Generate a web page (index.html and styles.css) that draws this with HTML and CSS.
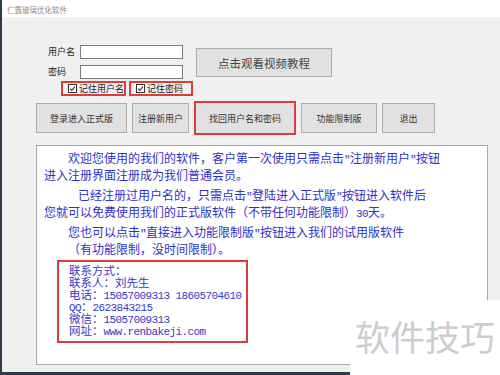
FILE: index.html
```html
<!DOCTYPE html>
<html lang="zh-CN">

<head>
  <meta charset="UTF-8">
  <meta name="viewport" content="width=device-width, initial-scale=1.0">
  <title>仁霸玻璃优化软件</title>
  <link rel="stylesheet" href="styles.css">
</head>

<body>
  <div class="window">
    <div class="titlebar">仁霸玻璃优化软件</div>
    <div class="client">
      <div class="login">
        <div class="fields">
          <label class="label">用户名</label>
          <input class="input" type="text">
          <label class="label">密码</label>
          <input class="input" type="password">
        </div>
        <button class="btn video">点击观看视频教程</button>
      </div>
      <div class="remember">
        <span class="check name">
          <svg width="9" height="9" viewBox="0 0 9 9"><rect x="0.5" y="0.5" width="8" height="8" fill="#fff" stroke="#333"/><path d="M2 4.6 L3.8 6.4 L7 2.6" fill="none" stroke="#333" stroke-width="1.1"/></svg>
          <span>记住用户名</span>
        </span>
        <span class="check pass">
          <svg width="9" height="9" viewBox="0 0 9 9"><rect x="0.5" y="0.5" width="8" height="8" fill="#fff" stroke="#333"/><path d="M2 4.6 L3.8 6.4 L7 2.6" fill="none" stroke="#333" stroke-width="1.1"/></svg>
          <span>记住密码</span>
        </span>
      </div>
      <div class="actions">
        <button class="btn w-login">登录进入正式版</button>
        <button class="btn w-reg">注册新用户</button>
        <button class="btn w-find marked">找回用户名和密码</button>
        <button class="btn w-limit">功能限制版</button>
        <button class="btn w-exit">退出</button>
      </div>
      <div class="memo">
        <div class="para">
          <div class="ln in2">欢迎您使用的我们的软件，客户第一次使用只需点击<span class="en">"</span>注册新用户<span class="en">"</span>按钮</div>
          <div class="ln">进入注册界面注册成为我们普通会员。</div>
        </div>
        <div class="para">
          <div class="ln in3">已经注册过用户名的，只需点击<span class="en">"</span>登陆进入正式版<span class="en">"</span>按钮进入软件后</div>
          <div class="ln">您就可以免费使用我们的正式版软件（不带任何功能限制）<span class="en">30</span>天。</div>
        </div>
        <div class="para">
          <div class="ln in2">您也可以点击<span class="en">"</span>直接进入功能限制版<span class="en">"</span>按钮进入我们的试用版软件</div>
          <div class="ln in2">（有功能限制，没时间限制）。</div>
        </div>
        <div class="contact">
          <div class="row">联系方式：</div>
          <div class="row">联系人：刘先生</div>
          <div class="row">电话：<span class="en">15057009313 18605704610</span></div>
          <div class="row"><span class="en">QQ</span>：<span class="en">2623843215</span></div>
          <div class="row">微信：<span class="en">15057009313</span></div>
          <div class="row">网址：<span class="en">www.renbakeji.com</span></div>
        </div>
      </div>
    </div>
  </div>
  <div class="watermark">软件技巧</div>
</body>

</html>
```

FILE: styles.css
```css
body {
  margin: 0;
  width: 500px;
  height: 375px;
  overflow: hidden;
  background: #2f3a48;
  font-family: "Noto Sans CJK SC", "Microsoft YaHei", sans-serif;
  position: relative;
}

.window {
  margin-left: 2px;
  width: 498px;
  height: 372px;
  background: #f0f0f0;
  display: flex;
  flex-direction: column;
}

.titlebar {
  height: 18px;
  background: #fff;
  color: #8c8c8c;
  font-size: 7.5px;
  line-height: 20px;
  padding-left: 5px;
  border-bottom: 1px solid #f4f4f4;
  box-sizing: border-box;
}

.client {
  flex: 1;
  padding-top: 27px;
}

.login {
  display: flex;
  padding-left: 46px;
}

.fields {
  display: grid;
  grid-template-columns: 32px 103px;
  row-gap: 6px;
  align-items: center;
}

.label {
  font-size: 9px;
  color: #222;
  line-height: 14px;
}

.input {
  height: 14px;
  width: 103px;
  box-sizing: border-box;
  border: 1px solid #7a7a7a;
  background: #fff;
  padding: 0;
  margin: 0;
}

.btn {
  font-family: "Noto Sans CJK SC", "Microsoft YaHei", sans-serif;
  font-size: 9px;
  color: #333;
  background: #e1e1e1;
  border: 1px solid #adadad;
  height: 30px;
  padding: 0;
  box-sizing: border-box;
}

.video {
  margin: 3px 0 0 13px;
  width: 136px;
  height: 29px;
  font-size: 11.5px;
  color: #444;
}

.remember {
  display: flex;
  gap: 3px;
  margin: 2px 0 0 59px;
}

.check {
  display: flex;
  align-items: center;
  gap: 2px;
  height: 15px;
  box-sizing: border-box;
  border: 2px solid #de3b3b;
  padding-left: 5px;
  font-size: 9px;
  line-height: 11px;
  color: #222;
  white-space: nowrap;
  overflow: hidden;
}

.check svg {
  flex: none;
}

.check.name {
  width: 65px;
}

.check.pass {
  width: 64px;
}

.actions {
  display: flex;
  align-items: center;
  gap: 5px;
  margin: 5px 0 0 34px;
  height: 34px;
}

.w-login { width: 91px; }
.w-reg { width: 57px; }
.w-find { width: 102px; }
.w-limit { width: 76px; }
.w-exit { width: 53px; }

.btn.marked {
  height: 34px;
  border: 2px solid #de3b3b;
}

.memo {
  margin: 10px 0 0 34px;
  width: 452px;
  height: 220px;
  box-sizing: border-box;
  background: #fff;
  border: 1px solid #a8a8a8;
  padding: 3px 0 0 7px;
  color: #3030c8;
  font-size: 12px;
  line-height: 17px;
}

.para {
  margin-bottom: 3px;
}

.ln {
  height: 17px;
  white-space: nowrap;
}

.ln.in2 {
  padding-left: 24px;
}

.ln.in3 {
  padding-left: 34px;
}

.en {
  font-family: "Liberation Mono", monospace;
  font-size: 11px;
  letter-spacing: -0.6px;
  line-height: 1;
}

.contact {
  margin-left: 13px;
  width: 191px;
  height: 83px;
  box-sizing: border-box;
  border: 2px solid #de3b3b;
  padding: 2px 0 0 10px;
  color: #3838c8;
  font-size: 11.5px;
}

.contact .row {
  height: 12px;
  line-height: 12px;
  white-space: nowrap;
}

.watermark {
  position: absolute;
  left: 350px;
  top: 300px;
  width: 150px;
  height: 75px;
  box-sizing: border-box;
  background: #fff;
  padding: 17px 0 0 5px;
  font-size: 35px;
  line-height: 38px;
  color: #cdcdcd;
}
```
